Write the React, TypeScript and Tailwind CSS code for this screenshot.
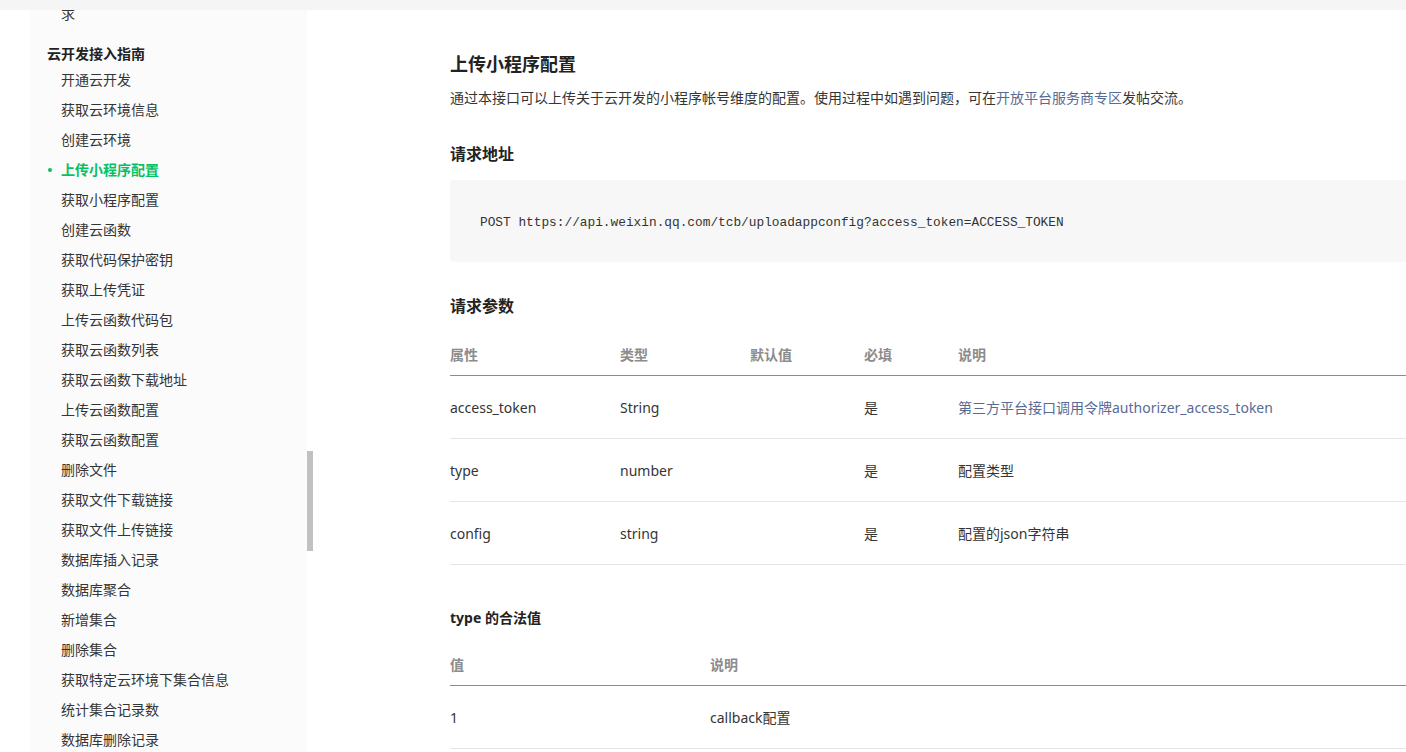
import React from 'react';

const navItems = [
  '开通云开发',
  '获取云环境信息',
  '创建云环境',
  '上传小程序配置',
  '获取小程序配置',
  '创建云函数',
  '获取代码保护密钥',
  '获取上传凭证',
  '上传云函数代码包',
  '获取云函数列表',
  '获取云函数下载地址',
  '上传云函数配置',
  '获取云函数配置',
  '删除文件',
  '获取文件下载链接',
  '获取文件上传链接',
  '数据库插入记录',
  '数据库聚合',
  '新增集合',
  '删除集合',
  '获取特定云环境下集合信息',
  '统计集合记录数',
  '数据库删除记录',
];

const params = [
  { name: 'access_token', type: 'String', def: '', required: '是', desc: '第三方平台接口调用令牌authorizer_access_token', link: true },
  { name: 'type', type: 'number', def: '', required: '是', desc: '配置类型', link: false },
  { name: 'config', type: 'string', def: '', required: '是', desc: '配置的json字符串', link: false },
];

const App: React.FC = () => {
  return (
    <div className="relative h-[752px] w-[1406px] overflow-hidden bg-white font-['Noto_Sans','Noto_Sans_CJK_SC',sans-serif] text-[14px] text-[#353535]">
      {/* top bar */}
      <div className="absolute left-0 right-0 top-0 z-10 h-[10px] bg-[#f5f5f5]"></div>

      <div className="flex h-full">
        {/* Sidebar */}
        <div className="ml-[30px] flex shrink-0">
          <nav className="w-[277px] bg-[#fbfbfb]">
            <div className="-mt-[1px] h-[30px] pl-[31px] leading-[30px]">求</div>
            <div className="mt-[14px] h-[22px] pl-[17px] font-bold leading-[22px] text-[#222]">云开发接入指南</div>
            {navItems.map((item) => {
              const active = item === '上传小程序配置';
              return (
                <div
                  key={item}
                  className={`relative h-[30px] pl-[31px] leading-[30px] ${
                    active ? 'font-bold text-[#07c160]' : 'text-[#353535]'
                  }`}
                >
                  {active && (
                    <span className="absolute left-[18px] top-[13px] h-[4px] w-[4px] rounded-full bg-[#07c160]"></span>
                  )}
                  {item}
                </div>
              );
            })}
          </nav>
          <div className="w-[6px]">
            <div className="mt-[451px] h-[100px] w-[6px] bg-[#c1c1c1]"></div>
          </div>
        </div>

        {/* Main */}
        <main className="pl-[137px]">
          <div className="w-[1000px]">
            <h1 className="mt-[50px] text-[18px] font-bold leading-[28px] text-[#222]">上传小程序配置</h1>
            <p className="mt-[8px] leading-[24px]">
              通过本接口可以上传关于云开发的小程序帐号维度的配置。使用过程中如遇到问题，可在
              <span className="text-[#576b95]">开放平台服务商专区</span>发帖交流。
            </p>

            <h2 className="mt-[31px] text-[16px] font-bold leading-[26px] text-[#222]">请求地址</h2>
            <div className="mt-[13px] flex h-[82px] items-center rounded-[3px] bg-[#f7f7f7] pl-[30px] pt-[4px]">
              <code className="font-['Liberation_Mono',monospace] text-[12.8px] text-[#333]">
                POST https://api.weixin.qq.com/tcb/uploadappconfig?access_token=ACCESS_TOKEN
              </code>
            </div>

            <h2 className="mt-[31px] text-[16px] font-bold leading-[26px] text-[#222]">请求参数</h2>
            <div className="mt-[14px]">
              <div className="flex h-[43px] items-center border-b border-[#8c8c8c] font-bold text-[#8c8c8c]">
                <div className="w-[170px]">属性</div>
                <div className="w-[130px]">类型</div>
                <div className="w-[114px]">默认值</div>
                <div className="w-[94px]">必填</div>
                <div className="flex-1">说明</div>
              </div>
              {params.map((p) => (
                <div key={p.name} className="flex h-[63px] items-center border-b border-[#e5e5e5]">
                  <div className="w-[170px]">{p.name}</div>
                  <div className="w-[130px]">{p.type}</div>
                  <div className="w-[114px]">{p.def}</div>
                  <div className="w-[94px]">{p.required}</div>
                  <div className={`flex-1 ${p.link ? 'text-[#576b95]' : ''}`}>{p.desc}</div>
                </div>
              ))}
            </div>

            <h3 className="mt-[42px] font-bold leading-[22px] text-[#222]">type 的合法值</h3>
            <div className="mt-[14px]">
              <div className="flex h-[43px] items-center border-b border-[#8c8c8c] font-bold text-[#8c8c8c]">
                <div className="w-[260px]">值</div>
                <div className="flex-1">说明</div>
              </div>
              <div className="flex h-[63px] items-center border-b border-[#e5e5e5]">
                <div className="w-[260px]">1</div>
                <div className="flex-1">callback配置</div>
              </div>
            </div>
          </div>
        </main>
      </div>
    </div>
  );
};

export default App;
